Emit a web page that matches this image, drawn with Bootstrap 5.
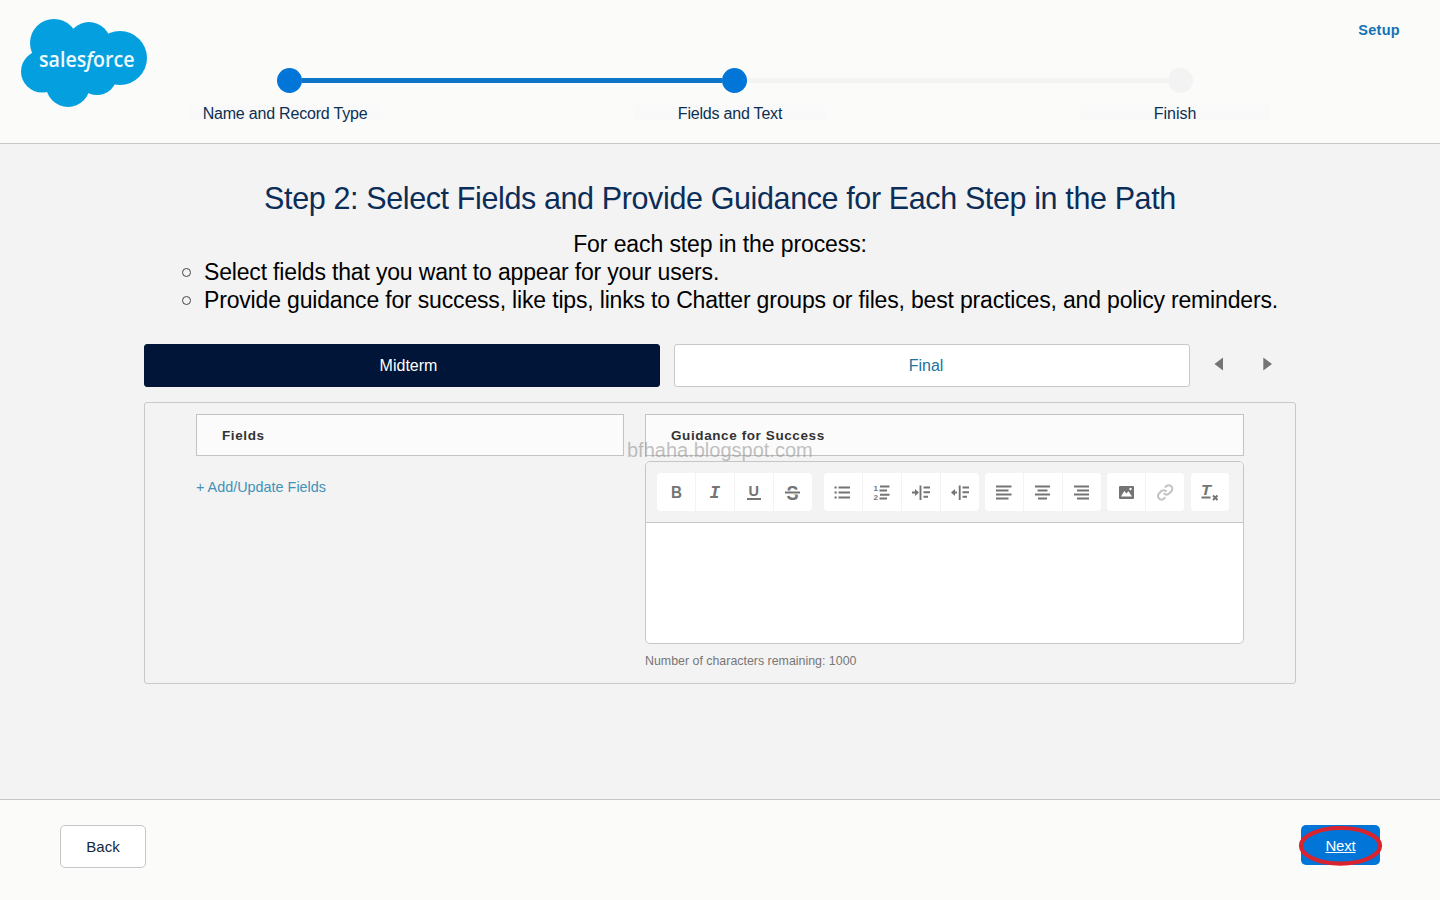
<!DOCTYPE html>
<html lang="en">
<head>
<meta charset="utf-8">
<meta name="viewport" content="width=device-width, initial-scale=1">
<title>Path Settings</title>
<link rel="stylesheet" href="https://cdn.jsdelivr.net/npm/bootstrap@5.3.0/dist/css/bootstrap.min.css">
<style>
body{font-family:"Liberation Sans",Arial,sans-serif;background:#f3f3f3;color:#000;height:900px;overflow:hidden}
.top-bar{height:144px;background:#fbfbf9;border-bottom:1px solid #c9c9c9}
.logo{left:0;top:0}
.setup-link{right:40px;top:20px;font:bold 14.5px/20px "Liberation Sans",Arial,sans-serif;color:#1272b5;letter-spacing:.3px}
.track{padding:68px 0 0 277px}
.dot{width:25px;height:25px;border-radius:50%;background:#0176d8;flex:none}
.seg{width:420px;height:5px;background:#0f75c8;flex:none}
.seg.dim{width:421px}
.dim{background:#f3f3f3}
.labels{padding:12px 0 0 190px;gap:255px}
.step-label{width:190px;height:16px;background:#f9f9fa;font-size:16px;line-height:18px;color:#0d2f50;text-align:center;white-space:nowrap;letter-spacing:-.2px}
.step-label:last-child{letter-spacing:0}
.title{font-size:30.5px;line-height:36px;color:#0b2d58;margin:36px 0 0;font-weight:400;white-space:nowrap;letter-spacing:-.38px}
.intro{font-size:23px;line-height:28px;margin-top:14px;white-space:nowrap;letter-spacing:-.17px}
.intro .lead-in{letter-spacing:-.1px}
.intro ul{list-style:none;padding-left:182px}
.ring{width:9px;height:9px;border:1px solid #444;border-radius:50%;margin-right:13px}
.wrap{width:1152px;margin:30px auto 0}
.tab-btn{width:516px;height:43px;border-radius:3px;border:1px solid #c8c8c8;background:#fff;color:#23749c;font-size:16px;line-height:41px;text-align:center;padding:0 12px 0 0}
.tab-btn.current{background:#001537;border-color:#001537;color:#fff;padding:0 0 0 13px;margin-right:14px}
.arrows{margin:0 0 3px 24px}
.panel{height:282px;margin-top:15px;border:1px solid #c9c9c9;border-radius:3px;padding:11px 51px}
.col-fields{width:428px;margin-right:21px}
.col-guide{width:599px}
.box-head{height:42px;border:1px solid #c3c3c3;background:#fbfbfb;padding-left:25px;font-weight:bold;font-size:13.5px;line-height:41px;color:#333;white-space:nowrap;letter-spacing:.6px}
.add-link{font-size:14.4px;line-height:20px;margin-top:21px;color:#4491b6;white-space:nowrap}
.editor{height:183px;margin-top:5px;border:1px solid #c6c6c6;border-radius:5px;background:#fff;overflow:hidden}
.tools{height:61px;background:#f3f3f3;border-bottom:1px solid #c6c6c6;padding:11px 0 0 11px}
.grp{border-radius:4px;overflow:hidden;gap:1px;height:38px;margin-right:6px}
.grp.wide-gap{margin-right:12px}
.grp.end-gap{margin-right:7px}
.tool{width:38px;height:38px;background:#fff;border:0;padding:0;display:block}
.tool svg{display:block;fill:none;stroke:#747474;stroke-width:1.9}
.tool text,.tool .solid{fill:#747474;stroke:none;font-weight:bold}
.remain{font-size:12.4px;line-height:16px;margin-top:9px;color:#777;white-space:nowrap}
.stamp{left:627px;top:438px;font-size:20px;line-height:24px;color:rgba(150,150,150,.6);white-space:nowrap}
.foot{height:101px;background:#fbfbf9;border-top:1px solid #c6c6c9;margin-top:115px;padding:25px 60px}
.foot button{font-size:15px;border-radius:5px;padding:2px 0 0}
.back-btn{width:86px;height:43px;border:1px solid #c6c6c8;background:#fff;color:#12283c}
.next-btn{width:79px;height:40px;border:0;background:#0176d8;color:#fff;text-decoration:underline;letter-spacing:-.2px;display:block}
.ring-mark{left:-3px;top:-1px;pointer-events:none}
</style>
</head>
<body>
<header class="top-bar position-relative">
<svg class="logo position-absolute" width="160" height="120" viewBox="0 0 160 120">
<g fill="#049fdf"><circle cx="54" cy="43" r="24"/><circle cx="89" cy="43.500" r="21.500"/><circle cx="120" cy="58" r="27"/><circle cx="42" cy="71.500" r="21"/><circle cx="68" cy="85" r="22"/><circle cx="97" cy="75" r="20"/><path d="M45 50H110V80H50Z"/></g>
<text x="39" y="66.500" textLength="95.500" lengthAdjust="spacingAndGlyphs" fill="#effaff" font-family="Open Sans,sans-serif" font-size="22" font-weight="600">sales<tspan font-style="italic">f</tspan>orce</text>
</svg>
<a class="setup-link position-absolute text-decoration-none" href="#">Setup</a>
<div class="track d-flex align-items-center"><i class="dot"></i><i class="seg"></i><i class="dot"></i><i class="seg dim"></i><i class="dot dim"></i></div>
<div class="labels d-flex"><div class="step-label">Name and Record Type</div><div class="step-label">Fields and Text</div><div class="step-label">Finish</div></div>
</header>
<main>
<h1 class="title text-center">Step 2: Select Fields and Provide Guidance for Each Step in the Path</h1>
<div class="intro">
<div class="lead-in text-center">For each step in the process:</div>
<ul class="mb-0"><li class="d-flex align-items-center"><i class="ring"></i>Select fields that you want to appear for your users.</li><li class="d-flex align-items-center"><i class="ring"></i>Provide guidance for success, like tips, links to Chatter groups or files, best practices, and policy reminders.</li></ul>
</div>
<div class="wrap">
<div class="d-flex align-items-center"><button class="tab-btn current">Midterm</button><button class="tab-btn">Final</button>
<svg class="arrows" width="60" height="20" viewBox="0 0 60 20" fill="#747474"><path d="M.5 10 9 3.500V16.500Z"/><path d="M58 10 49.300 3.500V16.500Z"/></svg></div>
<section class="panel d-flex">
<div class="col-fields"><div class="box-head">Fields</div><div class="add-link">+ Add/Update Fields</div></div>
<div class="col-guide"><div class="box-head">Guidance for Success</div>
<div class="editor"><div class="tools d-flex">
<div class="grp wide-gap d-flex">
<button class="tool"><svg width="38" height="38"><text x="14" y="25" font-size="16.500" textLength="11" lengthAdjust="spacingAndGlyphs">B</text></svg></button>
<button class="tool"><svg width="38" height="38"><text x="13.500" y="25" font-size="17.500" font-family="Liberation Mono" font-style="italic">I</text></svg></button>
<button class="tool"><svg width="38" height="38"><text x="13.500" y="23.300" font-size="14.500">U</text><path d="M12 26H26"/></svg></button>
<button class="tool"><svg width="38" height="38"><text x="12.500" y="26.500" font-size="20" textLength="12" lengthAdjust="spacingAndGlyphs">S</text><path d="M12 19.500H25" stroke="#fff" style="stroke:#fff;stroke-width:4"/><path d="M11 19.500H26"/></svg></button>
</div>
<div class="grp d-flex">
<button class="tool"><svg width="38" height="38"><path d="M10.500 14.500h2.200M10.500 19.500h2.200M10.500 24.500h2.200M14.500 14.500H26M14.500 19.500H26M14.500 24.500H26"/></svg></button>
<button class="tool"><svg width="38" height="38"><text x="10.500" y="18" font-size="8">1</text><text x="10.500" y="27" font-size="8">2</text><path d="M17 13.500H26.500M16.500 17.500H24M17 21.800H26.500M16.500 25.500H24"/></svg></button>
<button class="tool"><svg width="38" height="38"><path d="M10 19.500H15M18.500 12.500V27M21.500 14.500H28M21.500 19.300H28M21.500 23.700H26"/><path class="solid" d="M13 16 17 19.500 13 23Z"/></svg></button>
<button class="tool"><svg width="38" height="38"><path d="M12 19.500H16M18.700 12.500V27M21.500 14.500H28M21.500 19.300H28M21.500 23.700H26"/><path class="solid" d="M14 16 10 19.500 14 23Z"/></svg></button>
</div>
<div class="grp d-flex">
<button class="tool"><svg width="38" height="38"><path d="M11 13.500H26.500M11 17.500H23.500M11 21.500H26.500M11 25.500H23.500"/></svg></button>
<button class="tool"><svg width="38" height="38"><path d="M11 13.500H26M13.500 17.500H23.500M11 21.500H26M14 25.500H23"/></svg></button>
<button class="tool"><svg width="38" height="38"><path d="M11 13.500H26M14 17.500H26M11 21.500H26M14 25.500H26"/></svg></button>
</div>
<div class="grp end-gap d-flex">
<button class="tool"><svg width="38" height="38"><rect class="solid" x="12" y="13" width="15" height="13" rx="1"/><path d="M14 23.500 17.300 18 19.300 20.500 21.500 18.300 25 23.500Z" fill="#fff" stroke="none"/><circle cx="23.500" cy="16" r="1.200" fill="#fff" stroke="none"/></svg></button>
<button class="tool"><svg width="38" height="38"><g transform="translate(10.500 10.800) scale(.72)" style="stroke:#c4c4c4;stroke-width:2.900"><path d="M10 13a5 5 0 0 0 7.540.540l3-3a5 5 0 0 0-7.070-7.070l-1.720 1.710"/><path d="M14 11a5 5 0 0 0-7.540-.540l-3 3a5 5 0 0 0 7.070 7.070l1.710-1.710"/></g></svg></button>
</div>
<div class="grp d-flex">
<button class="tool"><svg width="38" height="38"><text x="10" y="22" font-size="14.500" font-style="italic" textLength="10" lengthAdjust="spacingAndGlyphs">T</text><path d="M10.500 24.500H19.500"/><path d="M22 22.500 26.500 27M26.500 22.500 22 27" stroke-width="2"/></svg></button>
</div>
</div></div>
<div class="remain">Number of characters remaining: 1000</div></div>
</section>
</div>
</main>
<footer class="foot d-flex justify-content-between align-items-start"><button class="back-btn">Back</button><div class="position-relative"><button class="next-btn">Next</button><svg class="ring-mark position-absolute" width="86" height="44" viewBox="0 0 86 44"><ellipse cx="42.500" cy="21.800" rx="39.500" ry="17.800" fill="none" stroke="#d9232e" stroke-width="4.200"/></svg></div></footer>
<div class="stamp position-absolute">bfhaha.blogspot.com</div>
<script src="https://cdn.jsdelivr.net/npm/bootstrap@5.3.0/dist/js/bootstrap.bundle.min.js"></script>
</body>
</html>
